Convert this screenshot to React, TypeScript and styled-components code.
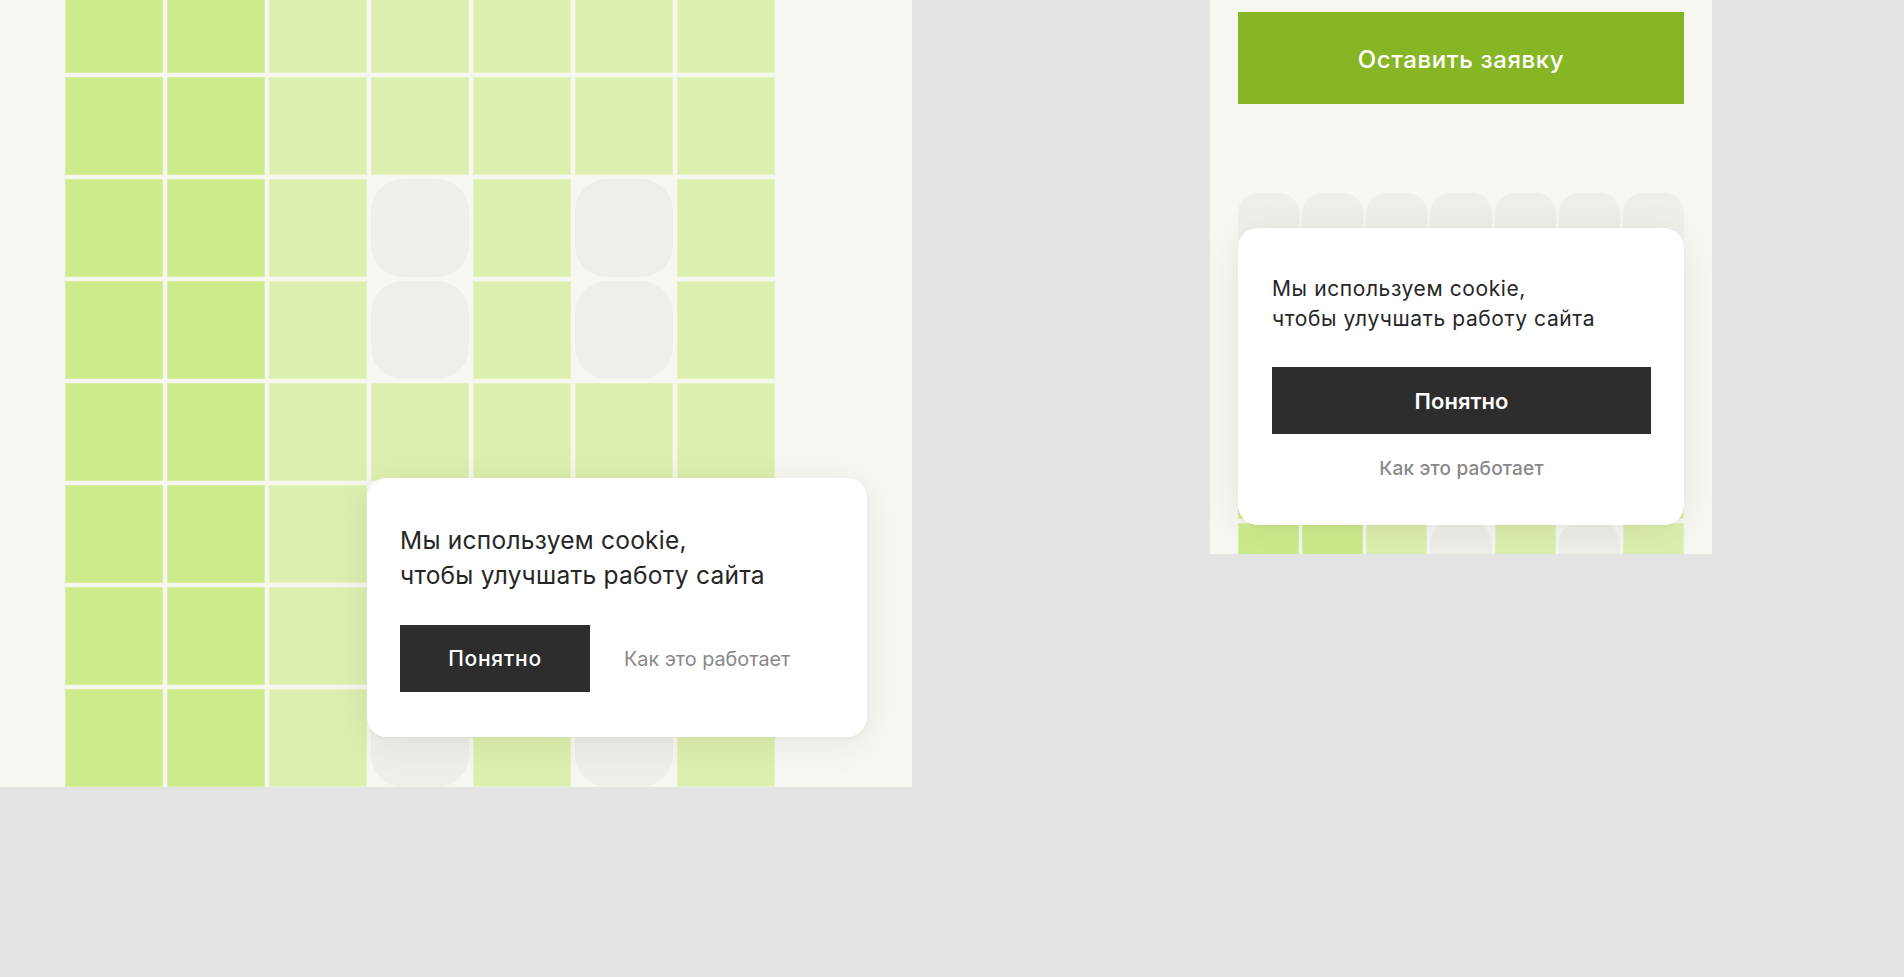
import React from "react";
import styled, { createGlobalStyle, css } from "styled-components";

type Kind = "dark" | "light" | "empty";
type Layout = "desktop" | "mobile";

const palette: Record<Kind, string> = {
  dark: "#cdeb8b",
  light: "#ddefae",
  empty: "#efefea",
};

const GlobalStyle = createGlobalStyle`
  html, body {
    margin: 0;
    padding: 0;
    background: #e4e4e4;
  }
  body {
    font-family: Inter, "Noto Sans", sans-serif;
    -webkit-font-smoothing: antialiased;
  }
  * { box-sizing: border-box; }
`;

const Canvas = styled.main`
  display: flex;
  align-items: flex-start;
  gap: 298px;
  width: 1904px;
  height: 977px;
  background: #e4e4e4;
  overflow: hidden;
`;

const Frame = styled.section<{ $layout: Layout }>`
  position: relative;
  flex: none;
  background: #f7f7f2;
  overflow: hidden;
  ${(p) =>
    p.$layout === "desktop"
      ? css`
          width: 912px;
          height: 787px;
          padding-left: 65px;
        `
      : css`
          width: 502px;
          height: 554px;
          padding: 12px 28px 0;
        `}
`;

const Grid = styled.div<{ $layout: Layout }>`
  display: grid;
  ${(p) =>
    p.$layout === "desktop"
      ? css`
          grid-template-columns: repeat(7, 98px);
          grid-auto-rows: 98px;
          gap: 4px;
          margin-top: -25px;
        `
      : css`
          grid-template-columns: repeat(7, 1fr);
          grid-auto-rows: 62px;
          column-gap: 3px;
          row-gap: 4px;
          margin-top: 89px;
        `}
`;

const Cell = styled.div<{ $kind: Kind; $layout: Layout }>`
  background: ${(p) => palette[p.$kind]};
  border-radius: ${(p) =>
    p.$kind === "empty" ? (p.$layout === "desktop" ? "32px" : "20px") : "0"};
  box-shadow: ${(p) =>
    p.$kind === "empty" ? "none" : "inset 0 0 0 1px rgba(255, 255, 255, 0.22)"};
`;

const ApplyButton = styled.button`
  display: flex;
  align-items: center;
  justify-content: center;
  width: 100%;
  height: 92px;
  padding: 3px 0 0;
  border: none;
  border-radius: 0;
  background: #86b624;
  color: #ffffff;
  font-family: Inter, "Noto Sans", sans-serif;
  font-size: 24px;
  font-weight: 500;
  letter-spacing: 0.6px;
  cursor: pointer;
`;

const CookieCard = styled.aside<{ $layout: Layout }>`
  position: absolute;
  display: flex;
  flex-direction: column;
  background: #ffffff;
  border-radius: 20px;
  box-shadow: 0 6px 40px rgba(0, 0, 0, 0.07), 0 1px 4px rgba(0, 0, 0, 0.03);
  ${(p) =>
    p.$layout === "desktop"
      ? css`
          left: 367px;
          top: 478px;
          width: 500px;
          padding: 45px 34px 45px 33px;
          gap: 32px;
        `
      : css`
          left: 28px;
          top: 228px;
          width: 446px;
          padding: 46px 33px 44px 34px;
          gap: 33px;
        `}
`;

const Message = styled.p<{ $layout: Layout }>`
  margin: 0;
  color: #262626;
  font-weight: 400;
  ${(p) =>
    p.$layout === "desktop"
      ? css`
          font-size: 24.5px;
          line-height: 35px;
          letter-spacing: 0.25px;
        `
      : css`
          font-size: 21px;
          line-height: 30px;
          letter-spacing: 0.6px;
        `}
`;

const Actions = styled.div<{ $layout: Layout }>`
  display: flex;
  ${(p) =>
    p.$layout === "desktop"
      ? css`
          flex-direction: row;
          align-items: center;
          gap: 34px;
        `
      : css`
          flex-direction: column;
          align-items: stretch;
          gap: 23px;
        `}
`;

const AcceptButton = styled.button<{ $layout: Layout }>`
  display: flex;
  align-items: center;
  justify-content: center;
  height: 67px;
  border: none;
  border-radius: 0;
  background: #2d2d2d;
  color: #ffffff;
  font-family: Inter, "Noto Sans", sans-serif;
  cursor: pointer;
  ${(p) =>
    p.$layout === "desktop"
      ? css`
          width: 190px;
          font-size: 21px;
          font-weight: 500;
          letter-spacing: 0.75px;
        `
      : css`
          width: 100%;
          font-size: 22px;
          font-weight: 600;
        `}
`;

const InfoLink = styled.a<{ $layout: Layout }>`
  color: #888888;
  text-decoration: none;
  cursor: pointer;
  ${(p) =>
    p.$layout === "desktop"
      ? css`
          font-size: 19.8px;
          line-height: 24px;
        `
      : css`
          font-size: 19px;
          line-height: 24px;
          letter-spacing: 0.2px;
          text-align: center;
          font-weight: 500;
        `}
`;

const D: Kind = "dark";
const L: Kind = "light";
const E: Kind = "empty";

const fullRow: Kind[] = [D, D, L, L, L, L, L];
const gapRow: Kind[] = [D, D, L, E, L, E, L];
const emptyRow: Kind[] = [E, E, E, E, E, E, E];

const desktopRows: Kind[][] = [fullRow, fullRow, gapRow, gapRow, fullRow, fullRow, fullRow, gapRow];
const mobileRows: Kind[][] = [emptyRow, fullRow, gapRow, gapRow, fullRow, gapRow];

function CellField({ rows, layout }: { rows: Kind[][]; layout: Layout }) {
  return (
    <Grid $layout={layout}>
      {rows.flatMap((row, r) =>
        row.map((kind, c) => <Cell key={`${r}-${c}`} $kind={kind} $layout={layout} />)
      )}
    </Grid>
  );
}

function CookieNotice({ layout }: { layout: Layout }) {
  return (
    <CookieCard $layout={layout}>
      <Message $layout={layout}>
        Мы используем cookie,
        <br />
        чтобы улучшать работу сайта
      </Message>
      <Actions $layout={layout}>
        <AcceptButton $layout={layout}>Понятно</AcceptButton>
        <InfoLink $layout={layout}>Как это работает</InfoLink>
      </Actions>
    </CookieCard>
  );
}

export default function App() {
  return (
    <>
      <GlobalStyle />
      <Canvas>
        <Frame $layout="desktop">
          <CellField rows={desktopRows} layout="desktop" />
          <CookieNotice layout="desktop" />
        </Frame>
        <Frame $layout="mobile">
          <ApplyButton>Оставить заявку</ApplyButton>
          <CellField rows={mobileRows} layout="mobile" />
          <CookieNotice layout="mobile" />
        </Frame>
      </Canvas>
    </>
  );
}
